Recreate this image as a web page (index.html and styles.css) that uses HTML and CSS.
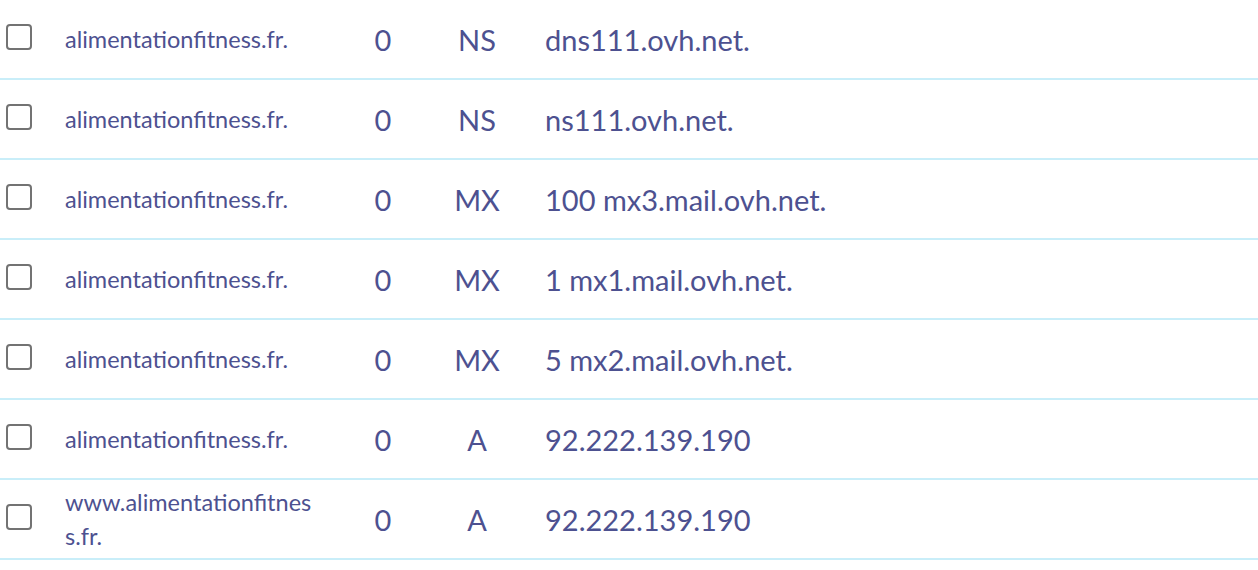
FILE: index.html
```html
<!DOCTYPE html>
<html lang="fr">
  <head>
    <meta charset="UTF-8" />
    <meta name="viewport" content="width=device-width, initial-scale=1.0" />
    <title>zone dns</title>
    <link rel="stylesheet" href="styles.css">
  </head>
  <body>
    <main class="zone">
      <div class="zone-row">
        <span class="zone-check"><span class="box"></span></span>
        <span class="zone-domain">alimentationfitness.fr.</span>
        <span class="zone-ttl">0</span>
        <span class="zone-type">NS</span>
        <span class="zone-target">dns111.ovh.net.</span>
      </div>
      <div class="zone-row">
        <span class="zone-check"><span class="box"></span></span>
        <span class="zone-domain">alimentationfitness.fr.</span>
        <span class="zone-ttl">0</span>
        <span class="zone-type">NS</span>
        <span class="zone-target">ns111.ovh.net.</span>
      </div>
      <div class="zone-row">
        <span class="zone-check"><span class="box"></span></span>
        <span class="zone-domain">alimentationfitness.fr.</span>
        <span class="zone-ttl">0</span>
        <span class="zone-type">MX</span>
        <span class="zone-target">100 mx3.mail.ovh.net.</span>
      </div>
      <div class="zone-row">
        <span class="zone-check"><span class="box"></span></span>
        <span class="zone-domain">alimentationfitness.fr.</span>
        <span class="zone-ttl">0</span>
        <span class="zone-type">MX</span>
        <span class="zone-target">1 mx1.mail.ovh.net.</span>
      </div>
      <div class="zone-row">
        <span class="zone-check"><span class="box"></span></span>
        <span class="zone-domain">alimentationfitness.fr.</span>
        <span class="zone-ttl">0</span>
        <span class="zone-type">MX</span>
        <span class="zone-target">5 mx2.mail.ovh.net.</span>
      </div>
      <div class="zone-row">
        <span class="zone-check"><span class="box"></span></span>
        <span class="zone-domain">alimentationfitness.fr.</span>
        <span class="zone-ttl">0</span>
        <span class="zone-type">A</span>
        <span class="zone-target">92.222.139.190</span>
      </div>
      <div class="zone-row">
        <span class="zone-check"><span class="box"></span></span>
        <span class="zone-domain">www.alimentationfitness.fr.</span>
        <span class="zone-ttl">0</span>
        <span class="zone-type">A</span>
        <span class="zone-target">92.222.139.190</span>
      </div>
    </main>
  </body>
</html>
```

FILE: styles.css
```css
:root {
  --text-color: #4d5190;
  --line-color: #c9eef9;
  --box-color: #737373;
}

html {
  box-sizing: border-box;
}

*,
*::before,
*::after {
  box-sizing: border-box;
}

body {
  margin: 0;
  background: #fff;
  color: var(--text-color);
  font-family: Lato, "Liberation Sans", sans-serif;
}

.zone-row {
  display: grid;
  grid-template-columns: 65px 250px 136px 52px 1fr;
  align-items: center;
  height: 80px;
  border-bottom: 2px solid var(--line-color);
}

.zone-check {
  padding-left: 6px;
  padding-bottom: 4px;
  display: flex;
}

.box {
  width: 26px;
  height: 26px;
  border: 2px solid var(--box-color);
  border-radius: 4px;
}

.zone-domain {
  font-size: 23.5px;
  line-height: 34px;
  word-break: break-all;
}

.zone-ttl,
.zone-type {
  font-size: 29px;
  text-align: center;
}

.zone-target {
  font-size: 29px;
  padding-left: 42px;
}
```
